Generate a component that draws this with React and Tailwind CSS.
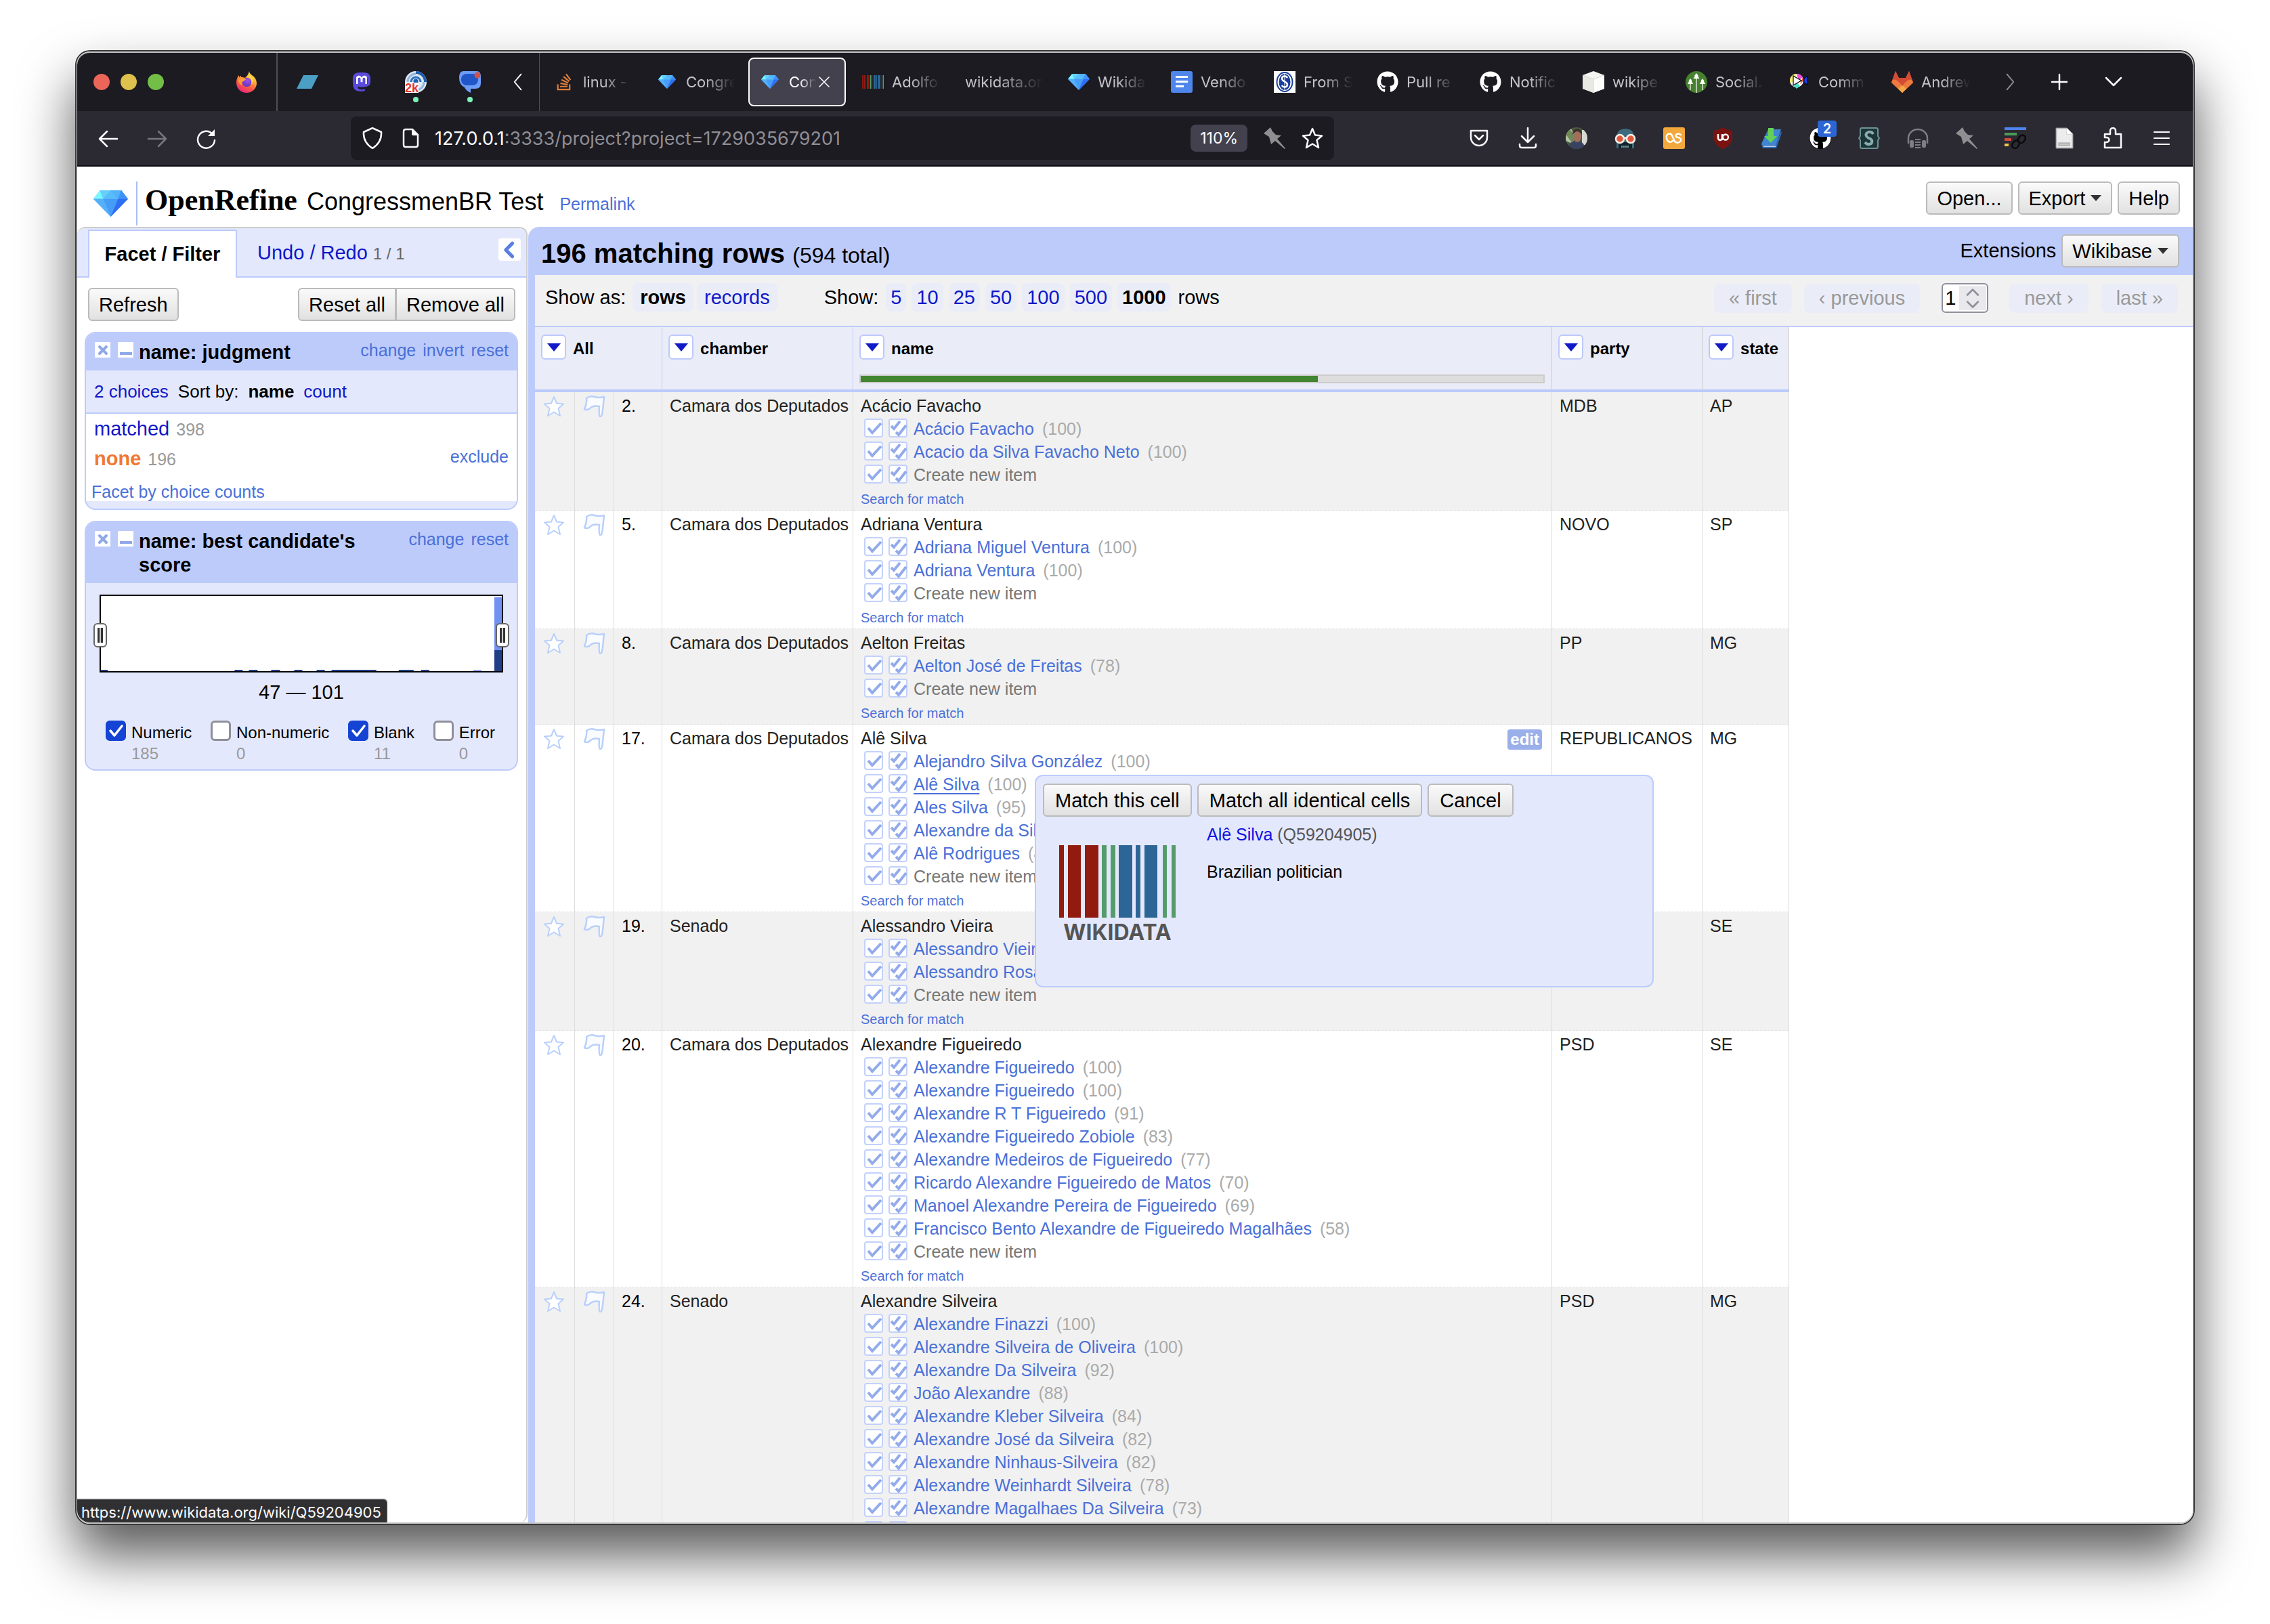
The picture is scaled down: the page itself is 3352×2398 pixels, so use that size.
import React from "react";
import { FaGithub, FaMastodon, FaStackOverflow } from "react-icons/fa";

const SANS = "font-['Liberation_Sans',Arial,sans-serif]";
const UI = "font-[Inter,Roboto,sans-serif]";

/* ---------- icons ---------- */

function Diamond({ className }) {
  return (
    <svg viewBox="0 0 52 40" preserveAspectRatio="none" className={className} aria-hidden="true">
      <path d="M10 0H42L52 13L26 40L0 13Z" fill="#459df8" />
      <path d="M10 0L0 13H15Z" fill="#7cf8ff" />
      <path d="M10 0H26L15 13Z" fill="#66d0fb" />
      <path d="M26 0L15 13H37Z" fill="#59bdfa" />
      <path d="M26 0H42L37 13Z" fill="#52b2fa" />
      <path d="M42 0L52 13H37Z" fill="#3f93f8" />
      <path d="M0 13H15L26 40Z" fill="#55b0fb" />
      <path d="M37 13H52L26 40Z" fill="#2f6ff4" />
    </svg>
  );
}

function Firefox() {
  return (
    <svg viewBox="0 0 32 32" className="size-8" aria-hidden="true">
      <defs>
        <linearGradient id="ffOuter" x1="0.8" y1="0" x2="0.3" y2="1">
          <stop offset="0" stopColor="#fff04d" />
          <stop offset="0.35" stopColor="#ffb13c" />
          <stop offset="0.65" stopColor="#ff5f3d" />
          <stop offset="1" stopColor="#e5247f" />
        </linearGradient>
        <radialGradient id="ffCore" cx="0.6" cy="0.3" r="0.8">
          <stop offset="0" stopColor="#a04df0" />
          <stop offset="1" stopColor="#5537b5" />
        </radialGradient>
      </defs>
      <path
        d="M20 0c0 3 2 4 4 6 5 3 7 8 7 12 0 8-7 14-15 14S1 26 1 17c0-4 1-8 4-11l0 3c1-1 2-2 3-2l0 2c2 0 4 0 6 1 2-2 5-5 6-10z"
        fill="url(#ffOuter)"
      />
      <circle cx="16.500" cy="16.500" r="6.800" fill="url(#ffCore)" />
      <path d="M4 12c4-3 9-2 12 1-3 0-4 2-6 3s-1 4 0 5c-4-1-7-5-6-9z" fill="#ff9a3c" />
      <path d="M17 8c6 2 8 6 6 12 3-3 4-9 0-12-2-2-4-1-6 0z" fill="#ffd84a" />
    </svg>
  );
}

function Parallelogram() {
  return (
    <svg viewBox="0 0 32 32" className="size-8" aria-hidden="true">
      <path d="M10 6H32L22 26H0Z" fill="#4b9fc4" />
    </svg>
  );
}

function Radar() {
  return (
    <svg viewBox="0 0 32 32" className="size-8" aria-hidden="true">
      <circle cx="16" cy="16" r="16" fill="#dfe9f5" />
      <path d="M16 0A16 16 0 0 1 32 16H28A12 12 0 0 0 16 4Z" fill="#1e5fae" />
      <path d="M4 16A12 12 0 0 1 16 4" fill="none" stroke="#8fb6df" strokeWidth="3" />
      <path d="M9 16a7 7 0 0 1 14 0" fill="none" stroke="#2c6fbd" strokeWidth="3" />
      <path d="M28 16a12 12 0 0 1-10 12" fill="none" stroke="#8fb6df" strokeWidth="3" />
      <circle cx="16" cy="15" r="3.500" fill="#1e5fae" />
      <rect x="0" y="17" width="20" height="15" fill="#ffffff" />
      <text x="0" y="31" fontSize="18" fontWeight="700" fill="#e3342b" fontFamily="Liberation Sans">
        2k
      </text>
    </svg>
  );
}

function ChatBubble() {
  return (
    <svg viewBox="0 0 32 32" className="size-8" aria-hidden="true">
      <path d="M6 0H26Q32 0 32 8V18Q32 26 24 26H17V32Q10 29 8 24Q0 20 0 10Q0 0 6 0Z" fill="#6c9bf8" />
      <rect x="3" y="4" width="25" height="17" rx="8" fill="#2156c9" />
      <circle cx="27" cy="6" r="4.500" fill="#d0524b" />
    </svg>
  );
}

function WikidataMini() {
  const bars = [
    [0, 1, "#8f1a12"], [2, 3, "#8f1a12"], [7, 4, "#8f1a12"], [12, 1, "#559c6a"], [14, 1, "#559c6a"],
    [17, 3, "#2d6596"], [21, 1, "#2d6596"], [23, 4, "#2d6596"], [29, 1, "#559c6a"], [31, 1, "#559c6a"],
  ];
  return (
    <svg viewBox="0 0 32 32" className="size-8" aria-hidden="true">
      {bars.map(([x, w, c]) => (
        <rect key={x} x={x} y="6" width={w} height="20" fill={c} />
      ))}
    </svg>
  );
}

function Docs() {
  return (
    <svg viewBox="0 0 32 32" className="size-8" aria-hidden="true">
      <rect width="32" height="32" rx="3" fill="#4f86ec" />
      <path d="M7 8.500H25M7 15.500H25M7 22.500H19" stroke="#fff" strokeWidth="3" />
    </svg>
  );
}

function SLogo() {
  return (
    <svg viewBox="0 0 32 32" className="size-8" aria-hidden="true">
      <rect width="32" height="32" fill="#fff" />
      <ellipse cx="16" cy="16" rx="11.500" ry="14" fill="none" stroke="#1b3f9c" strokeWidth="2" />
      <ellipse cx="16" cy="16" rx="8.500" ry="12" fill="#1b3f9c" />
      <path d="M20 10c-2-4-8-3-8 1 0 5 8 4 8 9 0 4-6 5-8 1" fill="none" stroke="#fff" strokeWidth="2.500" />
      <path d="M16 4V28" stroke="#fff" strokeWidth="1" />
    </svg>
  );
}

function Cube() {
  return (
    <svg viewBox="0 0 32 32" className="size-8" aria-hidden="true">
      <path d="M16 0L32 6V26L16 32L0 26V6Z" fill="#f4f4f0" />
      <path d="M0 6L16 12V32L0 26Z" fill="#e9e9e4" />
      <path d="M16 12L32 6V26L16 32Z" fill="#fcfcfa" />
      <path d="M0 6L16 12L32 6M16 12V32" fill="none" stroke="#cfcfca" strokeWidth="0.800" />
    </svg>
  );
}

function Trees() {
  return (
    <svg viewBox="0 0 32 32" className="size-8" aria-hidden="true">
      <circle cx="16" cy="16" r="16" fill="#47812f" />
      <path d="M16 3L19 7H18L20.500 11H11.500L14 7H13ZM16.600 11V32H15.400V11Z" fill="#fff" />
      <path d="M7 11L9.500 14H8.500L11 19H3L5.500 14H4.500ZM7.600 19V28H6.400V19Z" fill="#fff" />
      <path d="M25 11L27.500 14H26.500L29 19H21L23.500 14H22.500ZM25.600 19V28H24.400V19Z" fill="#fff" />
    </svg>
  );
}

function Commons() {
  return (
    <svg viewBox="0 0 32 32" className="size-8" aria-hidden="true">
      <circle cx="12" cy="14" r="10" fill="#fff" />
      <path d="M12 4A10 10 0 0 0 3 18L8 14Z" fill="#f4ef62" />
      <path d="M12 4A10 10 0 0 1 21 9L15 14Z" fill="#ef4bd8" />
      <path d="M8 22L12 26L17 22L12 16Z" fill="#48e0c8" />
      <path d="M17 20L22 14L21 9Z" fill="#e6412d" />
      <path d="M7 7L19 14L7 21Z" fill="#fff" stroke="#000" strokeWidth="1.200" />
      <path d="M23 11L28 7V20L23 17Z" fill="#1a3df0" stroke="#000" strokeWidth="1" />
    </svg>
  );
}

function Gitlab() {
  return (
    <svg viewBox="0 0 32 32" className="size-8" aria-hidden="true">
      <path d="M6 0L11 10H21L26 0L32 17L16 32L0 17Z" fill="#e2643a" />
      <path d="M6 0L11 10H21L26 0L31 14L16 22L1 14Z" fill="#d24b34" />
      <path d="M1 14Q6 9 16 22L16 32L0 17Z" fill="#ee7a3d" />
      <path d="M31 14Q26 9 16 22L16 32L32 17Z" fill="#ee7a3d" />
      <path d="M10 26L16 21L22 26L16 32Z" fill="#f2a944" />
    </svg>
  );
}

function Line({ d, box = 32, className = "size-8", width = 2.5, color = "#fbfbfe" }) {
  return (
    <svg viewBox={`0 0 ${box} ${box}`} className={className} fill="none" stroke={color} strokeWidth={width} strokeLinecap="round" strokeLinejoin="round" aria-hidden="true">
      <path d={d} />
    </svg>
  );
}

function Reload() {
  return (
    <svg viewBox="0 0 32 32" className="size-8" aria-hidden="true">
      <path d="M26 9A12.500 12.500 0 1 0 29 18" fill="none" stroke="#fbfbfe" strokeWidth="2.500" strokeLinecap="round" />
      <path d="M29 2V12H19Z" fill="#fbfbfe" />
    </svg>
  );
}

function PageIcon() {
  return (
    <svg viewBox="0 0 32 32" className="size-8" aria-hidden="true">
      <path d="M9 3H19L27 11V26Q27 29 24 29H9Q6 29 6 26V6Q6 3 9 3Z" fill="none" stroke="#fbfbfe" strokeWidth="2.500" />
      <path d="M18 2L28 12H20Q18 12 18 10Z" fill="#fbfbfe" />
    </svg>
  );
}

function Pushpin() {
  return (
    <svg viewBox="0 0 32 32" className="size-8" aria-hidden="true">
      <path d="M10 0L13 6L18 11L26 12L20 17L32 31L31 32L17 20L11 25L8 14L0 9Z" fill="#8f8f91" />
    </svg>
  );
}

function Avatar() {
  return (
    <svg viewBox="0 0 32 32" className="size-8" aria-hidden="true">
      <clipPath id="avatarClip"><circle cx="16" cy="16" r="16" /></clipPath>
      <g clipPath="url(#avatarClip)">
        <rect width="32" height="32" fill="#4c5b40" />
        <path d="M0 4L8 2L14 14L10 24L0 20Z" fill="#b4c3a4" />
        <path d="M4 0L14 14L10 24L0 10Z" fill="#6e8a57" />
        <rect x="24" y="4" width="8" height="22" fill="#d6d8d2" />
        <path d="M3 32Q5 20 16 20T29 32Z" fill="#39435f" />
        <ellipse cx="17" cy="13" rx="6" ry="9" fill="#a06f5c" />
        <path d="M10 11Q10 2 17 2T24 11Q20 6 17 6T10 11Z" fill="#3a322c" />
      </g>
    </svg>
  );
}

function Robot() {
  return (
    <svg viewBox="0 0 32 32" className="size-8" aria-hidden="true">
      <path d="M3 16Q3 2 16 2T29 16V31H3Z" fill="#3d6b7d" />
      <rect x="6" y="22" width="20" height="9" fill="#12232b" />
      <path d="M11 27V30M14 27V30M17 27V30M20 27V30" stroke="#8fc0c8" strokeWidth="1.500" />
      <circle cx="8" cy="17" r="6" fill="#e0593f" stroke="#f4f1e8" strokeWidth="2.500" />
      <circle cx="24" cy="17" r="6" fill="#e0593f" stroke="#f4f1e8" strokeWidth="2.500" />
      <path d="M13 16H19" stroke="#f4f1e8" strokeWidth="3" />
    </svg>
  );
}

function OsIcon() {
  return (
    <svg viewBox="0 0 32 32" className="size-8" aria-hidden="true">
      <rect width="32" height="32" rx="3" fill="#f3a83c" />
      <path d="M14 20Q9 24 6 19Q3 13 7 10Q11 8 13 12L17 21Q22 25 26 20Q27 16 22 15Q17 14 19 11Q22 8 26 11" fill="none" stroke="#fff" strokeWidth="2.500" strokeLinecap="round" />
    </svg>
  );
}

function Ublock() {
  return (
    <svg viewBox="0 0 32 32" className="size-8" aria-hidden="true">
      <path d="M16 0Q22 4 30 5V14Q30 26 16 32Q2 26 2 14V5Q10 4 16 0Z" fill="#7a1310" />
      <path d="M9 10V15Q9 19 12 19T15 15V10M15 10V19" fill="none" stroke="#fff" strokeWidth="2.400" />
      <circle cx="20" cy="14.500" r="4" fill="none" stroke="#fff" strokeWidth="2.400" />
    </svg>
  );
}

function BookDownload() {
  return (
    <svg viewBox="0 0 32 32" className="size-8" aria-hidden="true">
      <path d="M11 3H30L22 28H3Q0 26 2 22Z" fill="#3f85d0" />
      <path d="M3 26H22L30 6L31 8L23 31H4Q1 30 3 26Z" fill="#2b6cb6" />
      <path d="M4 28H22" stroke="#dfe9f4" strokeWidth="1.500" />
      <path d="M11 1H19V13H24L15 23L5 13H11Z" fill="#62d158" />
    </svg>
  );
}

function StylusIcon() {
  return (
    <svg viewBox="0 0 32 32" className="size-8" aria-hidden="true">
      <path d="M5 1H27Q29 1 29 4V13L31 16L29 19V28Q29 31 27 31H5Q3 31 3 28V19L1 16L3 13V4Q3 1 5 1Z" fill="#1d3438" stroke="#6d9495" strokeWidth="2" />
      <path d="M22 10Q20 6 15 7Q10 9 12 13Q14 16 18 17Q22 20 19 24Q14 27 10 22" fill="none" stroke="#86adae" strokeWidth="4" />
    </svg>
  );
}

function Headphones() {
  return (
    <svg viewBox="0 0 32 32" className="size-8" aria-hidden="true">
      <path d="M2 24V16A14 13 0 0 1 30 16V24" fill="none" stroke="#7d7d82" strokeWidth="2.500" />
      <rect x="4" y="19" width="6" height="11" rx="2" fill="#7d7d82" />
      <rect x="22" y="19" width="6" height="11" rx="2" fill="#7d7d82" />
      <path d="M12 18H20M12 22H20M12 26H20M12 30H20" stroke="#7d7d82" strokeWidth="2" />
    </svg>
  );
}

function LinkLines() {
  return (
    <svg viewBox="0 0 32 32" className="size-8" aria-hidden="true">
      <rect x="0" y="0" width="32" height="4" fill="#4d84ee" />
      <rect x="0" y="8" width="18" height="4" fill="#4b9b58" />
      <rect x="0" y="16" width="10" height="4" fill="#d2483b" />
      <rect x="0" y="24" width="6" height="4" fill="#f3c44a" />
      <g fill="none" stroke="#0b0b0d" strokeWidth="2.500">
        <rect x="21" y="11" width="9" height="12" rx="4.500" transform="rotate(35 25 17)" />
        <rect x="12" y="19" width="9" height="12" rx="4.500" transform="rotate(35 16 25)" />
      </g>
    </svg>
  );
}

function DocGrey() {
  return (
    <svg viewBox="0 0 32 32" className="size-8" aria-hidden="true">
      <path d="M4 1H20L29 10V31H4Z" fill="#d9d9d9" stroke="#8a8a8a" strokeWidth="1" />
      <path d="M6 3H19V11H27V29H6Z" fill="#ececec" />
      <path d="M20 1V10H29Z" fill="#fff" />
      <rect x="8" y="23" width="16" height="4" fill="#c7c7c7" stroke="#9a9a9a" strokeWidth="1" />
    </svg>
  );
}

function Star({ className = "size-8", stroke = "#b9d0fb", fill = "#ffffff", width = 2 }) {
  return (
    <svg viewBox="0 0 32 32" className={className} aria-hidden="true">
      <path d="M16 2L20 11.500L30 12.500L22.500 19L25 30L16 24.500L7 30L9.500 19L2 12.500L12 11.500Z" fill={fill} stroke={stroke} strokeWidth={width} strokeLinejoin="round" />
    </svg>
  );
}

function Flag() {
  return (
    <svg viewBox="0 0 32 32" className="size-8" aria-hidden="true">
      <path d="M5 4Q11 0 17 2T31 2L29 21Q28 32 25 31Q23 30 24 16Q14 14 9 20Q4 22 2 20Q6 12 5 4Z" fill="#f9fbff" stroke="#b9d0fb" strokeWidth="2.500" strokeLinejoin="round" />
    </svg>
  );
}

function Tick({ double }) {
  return (
    <svg viewBox="0 0 28 28" className="size-7" aria-hidden="true">
      <rect x="1" y="1" width="26" height="26" rx="3" fill="#fff" stroke="#c3d1fb" strokeWidth="2" />
      {double ? (
        <path d="M4 11L8 15L17 4M11 20L15 24L26 10" fill="none" stroke="#93abea" strokeWidth="4" />
      ) : (
        <path d="M6 14L12 21L25 7" fill="none" stroke="#93abea" strokeWidth="4" />
      )}
    </svg>
  );
}

function Caret() {
  return (
    <svg viewBox="0 0 16 9" className="h-[9px] w-4" aria-hidden="true">
      <path d="M0 0H16L8 9Z" fill="#333" />
    </svg>
  );
}

/* ---------- browser chrome ---------- */

const githubIcon = <FaGithub className="size-8 text-white" />;

const tabs = [
  { icon: <FaStackOverflow className="size-7 text-[#dd7f3b]" />, label: "linux - " },
  { icon: <Diamond className="h-5 w-[26px]" />, label: "Congre" },
  { icon: <Diamond className="h-5 w-[26px]" />, label: "Con", active: true },
  { icon: <WikidataMini />, label: "Adolfo" },
  { icon: null, label: "wikidata.or" },
  { icon: <Diamond className="h-6 w-8" />, label: "Wikida" },
  { icon: <Docs />, label: "Vendo" },
  { icon: <SLogo />, label: "From S" },
  { icon: githubIcon, label: "Pull re" },
  { icon: githubIcon, label: "Notific" },
  { icon: <Cube />, label: "wikipe" },
  { icon: <Trees />, label: "Social." },
  { icon: <Commons />, label: "Comm" },
  { icon: <Gitlab />, label: "Andrew" },
];

function Tab({ icon, label, active }) {
  return (
    <div
      className={
        active
          ? "mx-1 flex h-[72px] w-36 shrink-0 items-center gap-3 rounded-lg border-2 border-[#fbfbfe] bg-[#42414d] pl-[14px] pr-[22px] text-[#fbfbfe]"
          : "flex h-[72px] w-[152px] shrink-0 items-center gap-3 pl-5 pr-4 text-[#c4c4ca]"
      }
    >
      {icon && <span className="flex w-8 shrink-0 justify-center">{icon}</span>}
      <span className="min-w-0 flex-1 overflow-hidden whitespace-nowrap text-[22px] leading-8 [mask-image:linear-gradient(to_right,black_40%,transparent)]">
        {label}
      </span>
      {active && (
        <button type="button" aria-label="Close tab" className="-ml-2 shrink-0">
          <Line box={16} className="size-4" width={1.6} d="M1 1L15 15M15 1L1 15" />
        </button>
      )}
    </div>
  );
}

function TabStrip() {
  return (
    <div className="flex h-[86px] shrink-0 items-center bg-[#1c1b22] pl-6">
      <div className="flex gap-4">
        <button type="button" aria-label="Close" className="size-6 rounded-full bg-[#ec6559]" />
        <button type="button" aria-label="Minimize" className="size-6 rounded-full bg-[#e0c04c]" />
        <button type="button" aria-label="Zoom" className="size-6 rounded-full bg-[#72be47]" />
      </div>
      <span className="ml-[106px]"><Firefox /></span>
      <span className="ml-7 mr-1 h-full w-0.5 bg-[#4f4e57]" />
      {[<Parallelogram key="p" />, <FaMastodon key="m" className="size-8 text-[#5a4bdc]" />, <Radar key="r" />, <ChatBubble key="c" />].map((icon, i) => (
        <div key={i} className="relative flex w-20 justify-center">
          {i === 1 && <span className="absolute left-8 top-1.5 h-4 w-4 bg-white" />}
          <span className="relative">{icon}</span>
          {i > 1 && <span className="absolute top-[38px] size-2 rounded-full bg-[#7df5b9]" />}
        </div>
      ))}
      <button type="button" aria-label="Scroll tabs left" className="flex h-full w-[62px] items-center justify-center">
        <Line className="size-7" width={2.2} d="M21 3L10 16L21 29" />
      </button>
      <div className="flex h-full items-center border-l border-[#4f4e57]">
        {tabs.map((t, i) => <Tab key={i} {...t} />)}
      </div>
      <button type="button" aria-label="Scroll tabs right" className="flex w-[86px] justify-center">
        <Line className="size-7" width={2.2} color="#8f8f95" d="M11 3L22 16L11 29" />
      </button>
      <button type="button" aria-label="New tab" className="flex w-[60px] justify-center">
        <Line className="size-8" width={2.5} d="M16 5V27M5 16H27" />
      </button>
      <button type="button" aria-label="List all tabs" className="flex w-[100px] justify-center">
        <Line className="size-8" width={2.5} d="M5 10L16 21L27 10" />
      </button>
    </div>
  );
}

const extensions = [
  ["Pocket", <Line key="i" d="M4 5H28V15A12 12 0 0 1 4 15ZM10 12L16 18L22 12" />],
  ["Downloads", <Line key="i" d="M16 1V21M7 13L16 22L25 13M4 25V27Q4 30 7 30H25Q28 30 28 27V25" />],
  ["Account", <Avatar key="i" />],
  ["Privacy robot", <Robot key="i" />],
  ["Scrobbler", <OsIcon key="i" />],
  ["uBlock", <Ublock key="i" />],
  ["Save page", <BookDownload key="i" />],
  ["GitHub notifications", <FaGithub key="i" className="size-8 rounded-full bg-black text-white" />],
  ["Styles", <StylusIcon key="i" />],
  ["Audio", <Headphones key="i" />],
  ["Pin", <Pushpin key="i" />],
  ["Link lines", <LinkLines key="i" />],
  ["Document", <DocGrey key="i" />],
  ["Extensions", <Line key="i" d="M4 30V22H7A3.500 3.500 0 0 0 7 15H4V10H12V5A4 4 0 0 1 20 5V10H28V30Z" className="size-8" width={2.5} />],
  ["Menu", <Line key="i" d="M5 7H27M5 16H27M5 25H27" className="size-8" width={2.2} />],
];

function Toolbar() {
  return (
    <div className="flex h-[82px] shrink-0 items-center border-b-2 border-[#0c0c10] bg-[#2b2a33] px-2.5">
      <button type="button" aria-label="Back" className="flex w-[72px] justify-center"><Line d="M29 17H3M14 6L3 17L14 28" /></button>
      <button type="button" aria-label="Forward" className="flex w-[72px] justify-center"><Line color="#77767d" d="M3 17H29M18 6L29 17L18 28" /></button>
      <button type="button" aria-label="Reload" className="flex w-[72px] justify-center pt-0.5"><Reload /></button>
      <div className="mx-[178px] flex h-16 flex-1 items-center rounded-lg bg-[#1c1b22] pl-4 pr-4">
        <Line d="M16 1L29 7Q30 22 16 31Q2 22 3 7Z" />
        <span className="ml-6"><PageIcon /></span>
        <div className="ml-5 flex-1 whitespace-nowrap pt-0.5 text-[27px] leading-9 text-[#8f8e95]">
          <span className="text-[#fbfbfe]">127.0.0.1</span>:3333/project?project=1729035679201
        </div>
        <button type="button" className="h-10 rounded-lg bg-[#42414d] px-[14px] text-[23px] text-[#fbfbfe]">110%</button>
        <span className="ml-6"><Pushpin /></span>
        <button type="button" aria-label="Bookmark" className="ml-6"><Star stroke="#fbfbfe" fill="none" width={2.5} /></button>
      </div>
      {extensions.map(([name, icon]) => (
        <button key={name} type="button" aria-label={name} className="relative flex w-[72px] justify-center">
          {icon}
          {name === "GitHub notifications" && (
            <span className="absolute -top-2.5 left-8 h-6 w-7 rounded-sm bg-[#2b66d4] text-center text-[20px] font-semibold leading-6 text-white">2</span>
          )}
        </button>
      ))}
    </div>
  );
}

/* ---------- shared controls ---------- */

function Button({ children, className = "rounded-md" }) {
  return (
    <button
      type="button"
      className={`flex h-[49px] items-center gap-2 whitespace-nowrap border-2 border-[#bbbbbb] bg-linear-to-b from-[#fafafa] to-[#e1e1e1] px-3.5 text-[29px] leading-9 text-black ${className}`}
    >
      {children}
    </button>
  );
}

function Link({ children, className = "text-[#4a70d8]" }) {
  return <a href="#" className={className}>{children}</a>;
}

/* ---------- facets ---------- */

function FacetHeader({ title, actions }) {
  return (
    <div className="flex items-start bg-[#bdcbfb] pb-[9px] pl-[13px] pr-3 pt-2.5">
      <button type="button" aria-label="Remove facet" className="mt-[3px] grid size-[23px] place-items-center bg-white">
        <Line box={16} className="size-4" width={4} color="#8fa8e8" d="M3 3L13 13M13 3L3 13" />
      </button>
      <button type="button" aria-label="Minimize facet" className="ml-[11px] mt-[3px] flex size-[23px] items-end justify-center bg-white pb-1">
        <span className="h-1 w-[18px] bg-[#8fa8e8]" />
      </button>
      <h2 className="ml-2 max-w-[330px] flex-1 pt-px text-[29px] font-bold leading-[35px]">{title}</h2>
      <div className="ml-auto mt-[3px] flex gap-2.5 text-[25px] leading-6">
        {actions.map((a) => <Link key={a}>{a}</Link>)}
      </div>
    </div>
  );
}

const histogramMarks = [
  [2, 10], [199, 12], [220, 13], [253, 13], [287, 12], [320, 12], [342, 66], [441, 22], [474, 12],
];

const thumb =
  "pointer-events-none absolute -inset-x-[11px] top-[40px] h-9 appearance-none bg-transparent [&::-webkit-slider-thumb]:pointer-events-auto [&::-webkit-slider-thumb]:h-9 [&::-webkit-slider-thumb]:w-5 [&::-webkit-slider-thumb]:appearance-none [&::-webkit-slider-thumb]:rounded-md [&::-webkit-slider-thumb]:border-2 [&::-webkit-slider-thumb]:border-[#666666] [&::-webkit-slider-thumb]:bg-[linear-gradient(90deg,#fff_4px,#333_4px,#333_7px,#ccc_7px,#ccc_9px,#333_9px,#333_12px,#fff_12px)] [&::-webkit-slider-thumb]:bg-[length:16px_22px] [&::-webkit-slider-thumb]:bg-center [&::-webkit-slider-thumb]:bg-no-repeat [&::-webkit-slider-thumb]:bg-white";

function Check({ label, count, checked, name }) {
  return (
    <div className="flex gap-2">
      <span className="relative size-[30px]">
        <input
          id={name}
          type="checkbox"
          defaultChecked={checked}
          className="block size-[30px] appearance-none rounded-md border-[3px] border-[#8f8f9b] bg-white checked:border-[#1543d4] checked:bg-[#1543d4]"
        />
        {checked && (
          <svg viewBox="0 0 30 30" className="pointer-events-none absolute inset-0 size-[30px]" aria-hidden="true">
            <path d="M7 15L13 22L24 8" fill="none" stroke="#fff" strokeWidth="3.500" strokeLinecap="round" strokeLinejoin="round" />
          </svg>
        )}
      </span>
      <label htmlFor={name} className="pt-[2px] text-[24px] leading-[31px]">
        {label}
        <span className="block text-[#999999]">{count}</span>
      </label>
    </div>
  );
}

function LeftPanel() {
  return (
    <aside className="flex w-[665px] shrink-0 flex-col overflow-hidden rounded-xl border-r-2 border-t-2 border-[#cccccc] bg-white">
      <div className="flex h-[73px] shrink-0 items-end border-b-2 border-[#bdcbfb] bg-[#e4e8fc] pl-4">
        <button type="button" className="-mb-0.5 flex h-[71px] w-[220px] items-center justify-center border-2 border-b-0 border-[#bdcbfb] bg-white text-[29px] font-bold">
          Facet / Filter
        </button>
        <div className="flex h-[69px] flex-1 items-center gap-2.5 pl-[30px]">
          <button type="button" className="flex items-baseline gap-2 text-[29px] text-[#1018c8]">
            Undo / Redo <span className="text-[24px] text-[#666666]">1 / 1</span>
          </button>
        </div>
        <button type="button" aria-label="Hide panel" className="mb-[23px] mr-2 grid size-[33px] place-items-center rounded bg-white">
          <Line className="size-7" width={6} color="#5a7fe2" d="M20 5L9 16L20 27" />
        </button>
      </div>

      <div className="flex items-center pl-4 pr-4 pt-[15px]">
        <Button>Refresh</Button>
        <div className="ml-auto flex">
          <Button className="rounded-l-md">Reset all</Button>
          <Button className="rounded-r-md border-l">Remove all</Button>
        </div>
      </div>

      <section className="ml-[11px] mr-3 mt-4 overflow-hidden rounded-2xl border-2 border-[#bdcbfb] bg-[#e4e8fc]">
        <FacetHeader title="name: judgment" actions={["change", "invert", "reset"]} />
        <div className="flex h-16 items-center gap-[14px] border-b-2 border-[#bdcbfb] pl-3 text-[26px]">
          <Link className="text-[#1018c8]">2 choices</Link>
          <span>Sort by:</span>
          <span className="font-bold">name</span>
          <Link className="text-[#1018c8]">count</Link>
        </div>
        <div className="bg-white pl-3 pr-3 pt-px">
          <div className="flex h-11 items-center text-[29px]">
            <span className="flex items-baseline gap-2.5">
              <Link className="text-[#1018c8]">matched</Link> <span className="text-[25px] text-[#999999]">398</span>
            </span>
          </div>
          <div className="flex h-11 items-center text-[29px]">
            <span className="flex items-baseline gap-2.5">
              <Link className="font-bold text-[#f07830]">none</Link> <span className="text-[25px] text-[#999999]">196</span>
            </span>
            <span className="mb-1.5 ml-auto text-[25px]"><Link>exclude</Link></span>
          </div>
          <div className="-ml-1 pt-3 text-[25px] leading-7"><Link>Facet by choice counts</Link></div>
        </div>
        <div className="h-[11px]" />
      </section>

      <section className="ml-[11px] mr-3 mt-4 overflow-hidden rounded-2xl border-2 border-[#bdcbfb] bg-[#e4e8fc]">
        <FacetHeader title="name: best candidate's score" actions={["change", "reset"]} />
        <div className="px-5 pt-[17px]">
          <div className="relative h-[115px] border-2 border-black bg-white">
            <svg viewBox="0 0 591 111" preserveAspectRatio="none" className="block h-full w-full" aria-hidden="true">
              <rect x="580" y="2" width="11" height="78" fill="#7191f1" />
              <rect x="580" y="80" width="11" height="31" fill="#1f3f86" />
              {histogramMarks.map(([x, w]) => <rect key={x} x={x - 2} y="109" width={w} height="2" fill="#1f3f86" />)}
              <rect x="549" y="109" width="12" height="2" fill="#8fa8f5" />
            </svg>
            <input type="range" aria-label="Lowest score" min="47" max="101" defaultValue="47" className={`${thumb} w-[calc(100%+22px)]`} />
            <input type="range" aria-label="Highest score" min="47" max="101" defaultValue="101" className={`${thumb} w-[calc(100%+22px)]`} />
          </div>
          <div className="mt-[11px] text-center text-[29px] leading-9">47 — 101</div>
        </div>
        <div className="mt-6 flex justify-between pb-2 pl-[29px] pr-8">
          <Check name="numeric" label="Numeric" count="185" checked />
          <Check name="nonnumeric" label="Non-numeric" count="0" />
          <Check name="blank" label="Blank" count="11" checked />
          <Check name="error" label="Error" count="0" />
        </div>
      </section>
    </aside>
  );
}

/* ---------- data table ---------- */

const rows = [
  { n: 2, chamber: "Camara dos Deputados", name: "Acácio Favacho", party: "MDB", state: "AP",
    candidates: [["Acácio Favacho", 100], ["Acacio da Silva Favacho Neto", 100]] },
  { n: 5, chamber: "Camara dos Deputados", name: "Adriana Ventura", party: "NOVO", state: "SP",
    candidates: [["Adriana Miguel Ventura", 100], ["Adriana Ventura", 100]] },
  { n: 8, chamber: "Camara dos Deputados", name: "Aelton Freitas", party: "PP", state: "MG",
    candidates: [["Aelton José de Freitas", 78]] },
  { n: 17, chamber: "Camara dos Deputados", name: "Alê Silva", party: "REPUBLICANOS", state: "MG", open: true,
    candidates: [["Alejandro Silva González", 100], ["Alê Silva", 100], ["Ales Silva", 95], ["Alexandre da Silva", 50], ["Alê Rodrigues", 44]] },
  { n: 19, chamber: "Senado", name: "Alessandro Vieira", party: "", state: "SE",
    candidates: [["Alessandro Vieira", 100], ["Alessandro Rosa Vieira", 100]] },
  { n: 20, chamber: "Camara dos Deputados", name: "Alexandre Figueiredo", party: "PSD", state: "SE",
    candidates: [["Alexandre Figueiredo", 100], ["Alexandre Figueiredo", 100], ["Alexandre R T Figueiredo", 91], ["Alexandre Figueiredo Zobiole", 83], ["Alexandre Medeiros de Figueiredo", 77], ["Ricardo Alexandre Figueiredo de Matos", 70], ["Manoel Alexandre Pereira de Figueiredo", 69], ["Francisco Bento Alexandre de Figueiredo Magalhães", 58]] },
  { n: 24, chamber: "Senado", name: "Alexandre Silveira", party: "PSD", state: "MG",
    candidates: [["Alexandre Finazzi", 100], ["Alexandre Silveira de Oliveira", 100], ["Alexandre Da Silveira", 92], ["João Alexandre", 88], ["Alexandre Kleber Silveira", 84], ["Alexandre José da Silveira", 82], ["Alexandre Ninhaus-Silveira", 82], ["Alexandre Weinhardt Silveira", 78], ["Alexandre Magalhaes Da Silveira", 73]] },
];

function Candidate({ label, score, hovered }) {
  return (
    <li className="flex h-[34px] items-center whitespace-nowrap pl-[5px] leading-[34px]">
      <button type="button" aria-label={`Match ${label}`} className="-mt-0.5"><Tick /></button>
      <button type="button" aria-label={`Match ${label} in all identical cells`} className="-mt-0.5 ml-2"><Tick double /></button>
      {score === undefined ? (
        <span className="ml-[9px] text-[#777777]">{label}</span>
      ) : (
        <>
          <span className="ml-[9px]">
            <Link className={hovered ? "text-[#4a70d8] underline decoration-2 underline-offset-4" : "text-[#4a70d8]"}>{label}</Link>
          </span>
          <span className="ml-3 text-[#aaaaaa]">({score})</span>
        </>
      )}
    </li>
  );
}

const wikidataBars = [
  [0, 7, "#921b10"], [13, 19, "#921b10"], [38, 20, "#921b10"], [63, 7, "#559c6a"], [76, 7, "#559c6a"],
  [88, 20, "#2d6596"], [113, 7, "#2d6596"], [126, 19, "#2d6596"], [153, 6, "#559c6a"], [166, 6, "#559c6a"],
];

function MatchPopup() {
  return (
    <div role="dialog" aria-label="Match candidate" className="absolute left-[268px] top-[74px] z-10 h-[314px] w-[914px] rounded-xl border-2 border-[#bdcbfb] bg-[#e4e8fc] pl-2.5 pt-[11px]">
      <div className="flex gap-2">
        <Button className="rounded-md px-4">Match this cell</Button>
        <Button className="rounded-md px-4">Match all identical cells</Button>
        <Button className="rounded-md px-4">Cancel</Button>
      </div>
      <div className="flex">
        <div className="ml-6 mt-[42px] w-[172px]">
          <svg viewBox="0 0 172 107" className="block h-[107px] w-[172px]" role="img" aria-label="Wikidata">
            {wikidataBars.map(([x, w, c]) => <rect key={x} x={x} y="0" width={w} height="107" fill={c} />)}
          </svg>
          <div className={`${UI} mt-0.5 flex justify-center whitespace-nowrap text-[32px] font-bold leading-10 text-[#555555]`}>WIKIDATA</div>
        </div>
        <div className="ml-[46px] mt-[11px] text-[25px] leading-[30px]">
          <div className="text-[#555555]"><Link className="text-[#0d12e0]">Alê Silva</Link> (Q59204905)</div>
          <div className="mt-[25px] text-black">Brazilian politician</div>
        </div>
      </div>
    </div>
  );
}

function HeadCell({ children, span, border = "border-[#bdcbfb]", progress }) {
  return (
    <th scope="col" colSpan={span} className={`h-24 border-b-4 border-r border-b-[#bdcbfb] bg-[#eaedf7] pl-[9px] pr-2.5 pt-[11px] text-left align-top ${border}`}>
      <div className="flex items-center gap-2.5">
        <button type="button" aria-label={`${children} column menu`} className="grid size-[37px] place-items-center rounded-md border-2 border-[#bdc9fb] bg-white">
          <svg viewBox="0 0 20 12" className="h-3 w-5" aria-hidden="true"><path d="M0 0H20L10 12Z" fill="#1119c8" /></svg>
        </button>
        <span className="pt-1 text-[24px] font-bold leading-7">{children}</span>
      </div>
      {progress && (
        <div className="mt-[22px] h-[13px] border-2 border-[#cccccc] bg-[#dddddd]">
          <div className="h-full bg-[#438632]" style={{ width: `${progress * 100}%` }} />
        </div>
      )}
    </th>
  );
}

function DataTable() {
  const cell = "border-b border-r border-b-[#dddddd] border-r-[#dddddd] [border-bottom-style:dotted] align-top";
  const text = `${cell} whitespace-nowrap pl-[11px] pt-[5px] leading-[30px]`;
  return (
    <table className="w-[1852px] table-fixed border-separate border-spacing-0 text-[25px] text-[#222222]">
      <colgroup>
        <col className="w-[59px]" />
        <col className="w-[58px]" />
        <col className="w-[71px]" />
        <col className="w-[282px]" />
        <col className="w-[1032px]" />
        <col className="w-[222px]" />
        <col className="w-[128px]" />
      </colgroup>
      <thead className="text-black">
        <tr>
          <HeadCell span={3}>All</HeadCell>
          <HeadCell>chamber</HeadCell>
          <HeadCell progress={398 / 594}>name</HeadCell>
          <HeadCell border="border-r-[#cccccc]">party</HeadCell>
          <HeadCell border="border-r-[#cccccc]">state</HeadCell>
        </tr>
      </thead>
      <tbody>
        {rows.map((r) => (
          <tr key={r.n} className="odd:bg-[#f1f1f1] even:bg-white">
            <td className={`${cell} pl-3 pt-[5px]`}><button type="button" aria-label="Star row" className="block"><Star /></button></td>
            <td className={`${cell} pl-3 pt-[5px]`}><button type="button" aria-label="Flag row" className="block"><Flag /></button></td>
            <td className={`${text} text-black`}>{r.n}.</td>
            <td className={text}>{r.chamber}</td>
            <td className={`${text} relative pb-[2px]`}>
              <div className="mb-0.5 flex h-[30px] items-start justify-between pr-3.5">
                {r.name}
                {r.open && (
                  <button type="button" className="mt-0.5 h-[30px] rounded bg-[#9bb0ea] px-1 text-[24px] font-bold leading-7 text-white">edit</button>
                )}
              </div>
              <ul>
                {r.candidates.map(([label, score], i) => (
                  <Candidate key={i} label={label} score={score} hovered={r.open && i === 1} />
                ))}
                <Candidate label="Create new item" />
              </ul>
              <div className="mt-[5px] text-[20px] leading-7"><Link>Search for match</Link></div>
              {r.open && <MatchPopup />}
            </td>
            <td className={text}>{r.party}</td>
            <td className={text}>{r.state}</td>
          </tr>
        ))}
      </tbody>
    </table>
  );
}

function PagePill({ children }) {
  return <button type="button" disabled className="h-[43px] rounded-lg bg-[#eaedf7] px-[22px] text-[#999999]">{children}</button>;
}

function MainPanel() {
  return (
    <main className="ml-px flex min-w-0 flex-1 flex-col overflow-hidden rounded-tl-2xl bg-[#bdcbfb] pl-2.5">
      <div className="flex h-[71px] shrink-0 items-center pl-[9px] pr-5">
        <h2 className="flex-1 pt-1.5 text-[40px] font-bold">
          196 matching rows <span className="text-[32px] font-normal">(594 total)</span>
        </h2>
        <span className="mr-2 text-[29px]">Extensions</span>
        <Button>Wikibase <Caret /></Button>
      </div>
      <div className="flex h-[77px] shrink-0 items-start border-b-2 border-[#bdcbfb] bg-[#f1f1f1] pl-[15px] pr-[22px] pt-3 text-[29px] leading-[42px]">
        <span>Show as:</span>
        <div className="ml-2.5 flex gap-[5px]">
          <button type="button" className="rounded-lg bg-[#eaedf7] px-[11px] font-bold">rows</button>
          <button type="button" className="rounded-lg bg-[#eaedf7] px-[11px] text-[#1018c8]">records</button>
        </div>
        <span className="ml-[69px]">Show:</span>
        <div className="ml-[11px] flex gap-2">
          {["5", "10", "25", "50", "100", "500"].map((s) => (
            <button key={s} type="button" className="rounded-lg bg-[#eaedf7] px-[7px] text-[#1018c8]">{s}</button>
          ))}
          <button type="button" className="rounded-lg bg-[#eaedf7] px-[7px] font-bold">1000</button>
        </div>
        <span className="ml-[11px]">rows</span>
        <div className="ml-auto flex items-center">
          <PagePill>« first</PagePill>
          <span className="ml-[18px]"><PagePill>‹ previous</PagePill></span>
          <span className="ml-8 mr-[31px] flex h-[44px] w-[69px] items-center rounded-md border-2 border-[#8f8f9d] bg-white">
            <input type="number" aria-label="Page" defaultValue="1" className="h-full w-6 min-w-0 appearance-none pl-[3px] text-[29px] [&::-webkit-inner-spin-button]:appearance-none" />
            <span className="grid h-9 w-10 place-items-center bg-[#e9e9ed]">
              <Line className="size-9" width={2.5} color="#8f8f9d" d="M9 12L16 5L23 12M9 21L16 28L23 21" />
            </span>
          </span>
          <PagePill>next ›</PagePill>
          <span className="ml-[19px]"><PagePill>last »</PagePill></span>
        </div>
      </div>
      <div className="min-h-0 flex-1 overflow-hidden bg-white">
        <DataTable />
      </div>
    </main>
  );
}

function AppHeader() {
  return (
    <header className="flex h-[89px] shrink-0 items-start bg-white pl-6 pr-[19px]">
      <span className="mt-[35px]"><Diamond className="block h-[39px] w-[51px]" /></span>
      <span className="ml-3 mt-[22px] h-[65px] w-0.5 bg-[#a9bdf8]" />
      <div className="ml-[11px] mt-7 flex items-baseline whitespace-nowrap leading-[44px]">
        <h1 className="font-['Liberation_Serif','Times_New_Roman',serif] text-[44px] font-bold">OpenRefine</h1>
        <span className="ml-3.5 text-[36px]">CongressmenBR Test</span>
        <span className="ml-6 text-[25px]"><Link>Permalink</Link></span>
      </div>
      <div className="ml-auto mt-[22px] flex gap-2">
        <Button>Open...</Button>
        <Button>Export <Caret /></Button>
        <Button>Help</Button>
      </div>
    </header>
  );
}

export default function App() {
  return (
    <div className="flex h-screen flex-col bg-white px-[111px] pb-[146px] pt-[74px]">
      <div className={`${UI} flex min-h-0 flex-1 flex-col rounded-[22px] border-2 border-[#383838] bg-white shadow-[0_45px_80px_rgba(0,0,0,0.65)]`}>
        <div className="relative flex min-h-0 flex-1 flex-col overflow-hidden rounded-[20px] border-x border-y-2 border-[#c4c4c4]">
          <TabStrip />
          <Toolbar />
          <div className={`${SANS} flex min-h-0 flex-1 flex-col text-black`}>
            <AppHeader />
            <div className="flex min-h-0 flex-1">
              <LeftPanel />
              <MainPanel />
            </div>
          </div>
          <div className="absolute bottom-0 left-0 h-[35px] rounded-tr-md border-r border-t-2 border-[#5d5d60] bg-[#303033] pl-1.5 pr-2 text-[22px] leading-9 text-[#fbfbfe]">
            https://www.wikidata.org/wiki/Q59204905
          </div>
        </div>
      </div>
    </div>
  );
}
